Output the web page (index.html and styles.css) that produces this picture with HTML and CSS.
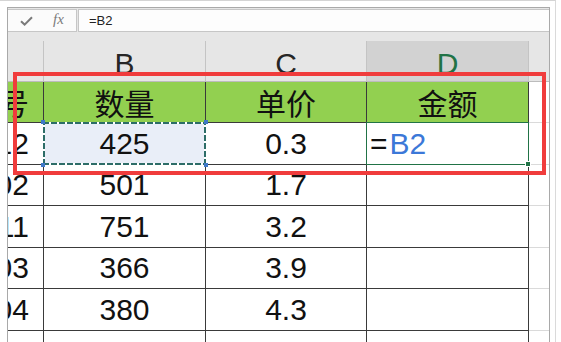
FILE: index.html
```html
<!DOCTYPE html>
<html lang="zh-CN">
<head>
<meta charset="utf-8">
<title>Excel</title>
<link rel="stylesheet" href="styles.css">
</head>
<body>
<div class="page">
  <div class="window">
    <div class="fbar">
      <div class="fbtns">
        <svg class="check" width="13" height="10" viewBox="0 0 13 10"><path d="M1 5.2 L4.6 8.6 L12 1.2" fill="none" stroke="#7a7a7a" stroke-width="2"/></svg>
        <span class="fx">fx</span>
      </div>
      <div class="finput">=B2</div>
    </div>
    <div class="sheet">
      <div class="ch ch-a"></div>
      <div class="ch">B</div>
      <div class="ch">C</div>
      <div class="ch ch-sel">D</div>
      <div class="ch ch-e"></div>

      <div class="c ca hdr"><span>编号</span></div>
      <div class="c hdr">数量</div>
      <div class="c hdr">单价</div>
      <div class="c hdr">金额</div>
      <div class="c ce"></div>

      <div class="c ca"><span>1012</span></div>
      <div class="c copy">425<i class="h h1"></i><i class="h h2"></i><i class="h h3"></i><i class="h h4"></i></div>
      <div class="c">0.3</div>
      <div class="c active"><span class="eq">=</span><span class="ref">B2</span></div>
      <div class="c ce"></div>

      <div class="c ca"><span>1002</span></div>
      <div class="c">501</div>
      <div class="c">1.7</div>
      <div class="c"></div>
      <div class="c ce"></div>

      <div class="c ca"><span>1011</span></div>
      <div class="c">751</div>
      <div class="c">3.2</div>
      <div class="c"></div>
      <div class="c ce"></div>

      <div class="c ca"><span>1003</span></div>
      <div class="c">366</div>
      <div class="c">3.9</div>
      <div class="c"></div>
      <div class="c ce"></div>

      <div class="c ca"><span>1004</span></div>
      <div class="c">380</div>
      <div class="c">4.3</div>
      <div class="c"></div>
      <div class="c ce"></div>

      <div class="c ca"><span></span></div>
      <div class="c"></div>
      <div class="c"></div>
      <div class="c"></div>
      <div class="c ce"></div>
    </div>
  </div>
  <div class="redbox"></div>
</div>
</body>
</html>
```

FILE: styles.css
```css
html, body {
  margin: 0;
  padding: 0;
  background: #fff;
}
body {
  width: 561px;
  height: 342px;
  overflow: hidden;
  font-family: "Liberation Sans", "Noto Sans CJK SC", sans-serif;
}
.page {
  position: relative;
  width: 556px;
  height: 342px;
  box-sizing: border-box;
  border-top: 1px solid #d4d4d4;
  border-right: 1px solid #dadada;
  padding: 6px 0 0 7px;
  overflow: hidden;
}
.window {
  width: 543px;
  height: 336px;
  box-sizing: border-box;
  border: 1px solid #a9a9a9;
  border-bottom: none;
  background: #e6e6e6;
  overflow: hidden;
}
.fbar {
  display: flex;
  gap: 1px;
  height: 24px;
  padding-top: 1px;
  box-sizing: border-box;
  background: #e6e6e6;
}
.fbtns {
  width: 69px;
  box-sizing: border-box;
  border: 1px solid #c6c6c6;
  border-left: none;
  background: #fbfbfb;
  display: flex;
  align-items: center;
  padding-left: 12px;
}
.check {
  display: block;
  margin-top: 1px;
}
.fx {
  font-family: "Liberation Serif", serif;
  font-style: italic;
  font-size: 15px;
  color: #7c7c7c;
  margin-left: 20px;
  margin-top: -2px;
}
.finput {
  flex: 1;
  box-sizing: border-box;
  border: 1px solid #c6c6c6;
  border-right: none;
  background: #fdfdfd;
  font-size: 13px;
  color: #222;
  padding-left: 10px;
  line-height: 21px;
}
.sheet {
  display: grid;
  grid-template-columns: 36px 162px 161px 162px 20px;
  grid-template-rows: 41px 41px 42px 41px 42px 41px 42px 42px;
  margin-top: 9px;
}
.ch {
  background: #e6e6e6;
  border-right: 1px solid #c4c4c4;
  border-bottom: 1px solid #bcbcbc;
  display: flex;
  align-items: center;
  justify-content: center;
  font-size: 30px;
  color: #262626;
  padding-top: 6px;
  box-sizing: border-box;
  overflow: hidden;
}
.ch-sel {
  background: #d2d2d2;
  color: #217346;
}
.ch-e {
  border-right: none;
}
.c {
  position: relative;
  box-sizing: border-box;
  background: #fff;
  border-right: 1px solid #3a3a3a;
  border-bottom: 1px solid #3a3a3a;
  display: flex;
  align-items: center;
  justify-content: center;
  font-size: 30px;
  color: #111;
  white-space: nowrap;
}
.hdr {
  background: #92d050;
  font-size: 30px;
  color: #111;
}
.ca {
  justify-content: flex-end;
  padding-right: 14px;
  overflow: hidden;
}
.ca span {
  flex: none;
}
.ce {
  background: #fff;
  border-right: none;
  border-bottom: 1px solid #dadada;
}
.copy {
  background: #e9eef8;
}
.copy::after {
  content: "";
  position: absolute;
  left: -1px;
  top: -1px;
  right: -1px;
  bottom: -1px;
  background:
    repeating-linear-gradient(90deg, #2d6d68 0 6px, #fff 6px 8px) top left / 100% 2px no-repeat,
    repeating-linear-gradient(90deg, #2d6d68 0 6px, #fff 6px 8px) bottom left / 100% 2px no-repeat,
    repeating-linear-gradient(0deg, #2d6d68 0 6px, #fff 6px 8px) top left / 2px 100% no-repeat,
    repeating-linear-gradient(0deg, #2d6d68 0 6px, #fff 6px 8px) top right / 2px 100% no-repeat;
}
.h {
  position: absolute;
  width: 4px;
  height: 4px;
  background: #3f78c8;
  z-index: 2;
}
.h1 { left: -3px; top: -3px; }
.h2 { right: -3px; top: -3px; }
.h3 { left: -3px; bottom: -3px; }
.h4 { right: -3px; bottom: -3px; }
.active {
  justify-content: flex-start;
  padding-left: 3px;
}
.active::after {
  content: "";
  position: absolute;
  left: -1px;
  top: -1px;
  right: -1px;
  bottom: -1px;
  border: 1.5px solid #217346;
}
.active::before {
  content: "";
  position: absolute;
  right: -3px;
  bottom: -3px;
  width: 4px;
  height: 4px;
  background: #217346;
  border: 1px solid #fff;
  z-index: 2;
}
.eq {
  color: #111;
  margin-right: 2px;
}
.ref {
  color: #3c78d8;
}
.redbox {
  position: absolute;
  left: 13px;
  top: 71px;
  width: 533px;
  height: 103px;
  box-sizing: border-box;
  border: 4px solid #f03c3c;
}
```
